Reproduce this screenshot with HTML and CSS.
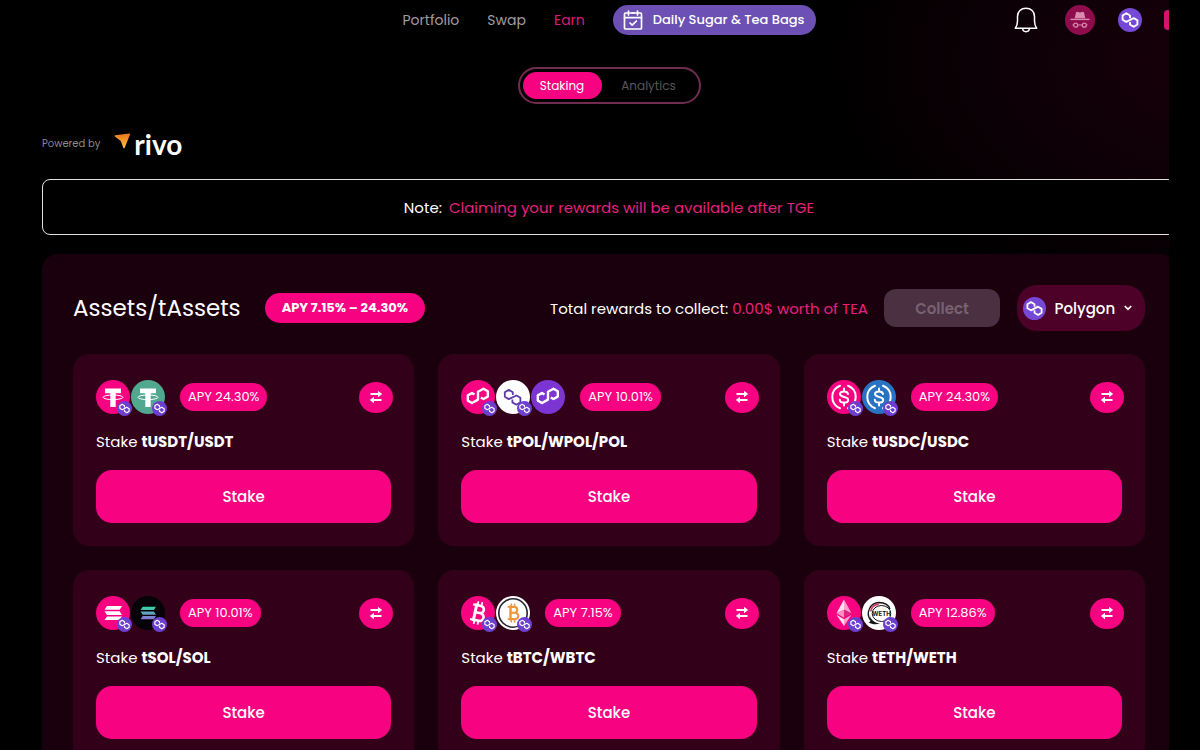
FILE: index.html
```html
<!DOCTYPE html>
<html lang="en">
<head>
<meta charset="utf-8">
<meta name="viewport" content="width=device-width, initial-scale=1">
<title>Staking</title>
<link rel="stylesheet" href="styles.css">
</head>
<body>
<svg class="defs" aria-hidden="true">
  <linearGradient id="rivo-grad" x1="0" y1="0" x2="0" y2="1"><stop offset="0" stop-color="#ee7420"/><stop offset="1" stop-color="#ffc53a"/></linearGradient>
  <linearGradient id="sol-grad" x1="0" y1="0" x2="0" y2="1"><stop offset="0" stop-color="#35d6a4"/><stop offset="1" stop-color="#8a72d8"/></linearGradient>
  <symbol id="chain" viewBox="0 0 24 24"><path d="M12 10.200V7.500L8.300 5.300 4.600 7.500v4.200l3.700 2.200 7.400-3.800 3.700 2.200v4.200l-3.700 2.200-3.700-2.200v-2.600" fill="none" stroke="currentColor" stroke-width="1.900" stroke-linejoin="round"/></symbol>
  <symbol id="pol" viewBox="0 0 34 34"><path d="M13.500 14.500 11 13l-4.200 2.400v5.200L11 23l6-3.400v-7.800L22.500 8.800l4.300 2.400v5.400L22.500 19l-2.700-1.500" fill="none" stroke="currentColor" stroke-width="2.400" stroke-linejoin="round"/></symbol>
  <symbol id="matic" viewBox="0 0 34 34"><path d="M16.800 15v-2.800l-4-2.300-4 2.300v4.600l4 2.300 7.600-3.600 4 2.300v4.600l-4 2.300-4-2.300v-2.800" fill="none" stroke="currentColor" stroke-width="1.800" stroke-linejoin="round"/></symbol>
  <symbol id="tether" viewBox="0 0 34 34"><path d="M9 8.500h16v4.800h-5.300V27h-5.400V13.300H9z" fill="currentColor"/><ellipse cx="17" cy="17.300" rx="10" ry="2.300" fill="none" stroke="currentColor" stroke-width="1"/></symbol>
  <symbol id="usdc" viewBox="0 0 34 34"><g fill="none" stroke="currentColor" stroke-width="2" stroke-linecap="round"><path d="M13 5.800a12 12 0 0 0 0 22.400M21 5.800a12 12 0 0 1 0 22.400"/><path d="M17 8.500v3M17 22.500v3M21 14c-.3-1.800-1.700-2.600-4-2.600s-4 .9-4 2.700c0 4 8.200 1.700 8.200 5.800 0 1.800-1.700 2.700-4.200 2.700s-4.100-1-4.200-2.900"/></g></symbol>
  <symbol id="solana" viewBox="0 0 34 34"><path d="M11 10h15l-2.300 3.700H8.500zM8.500 15.200h15.200l2.300 3.700H11zM11 20.400h15l-2.300 3.700H8.500z"/></symbol>
  <symbol id="bitcoin" viewBox="0 0 34 34"><g fill="none" stroke="currentColor"><path d="M13 9.500h5.500a3.600 3.600 0 0 1 0 7.200H13.500h6a3.900 3.900 0 0 1 0 7.800H13" stroke-width="2.600"/><path d="M14 8v18" stroke-width="3"/><path d="M10.500 9.500H14M10.500 24.500H14" stroke-width="2.200"/><path d="M15 5.500v4M19 5.500v4M15 24.500v4M19 24.500v4" stroke-width="1.800"/></g></symbol>
  <symbol id="swap" viewBox="0 0 16 16"><path d="M2.500 5h9.500M13.500 11H4" fill="none" stroke="currentColor" stroke-width="2"/><path d="M10 1.800 14.200 5 10 8.200zM6 7.800 1.800 11 6 14.200z" fill="currentColor"/></symbol>
</svg>

<div class="app">
<div class="shell">
  <header class="header">
    <nav class="nav">
      <a href="#">Portfolio</a>
      <a href="#">Swap</a>
      <a href="#" class="active">Earn</a>
      <a href="#" class="daily">
        <svg width="20" height="20" viewBox="0 0 20 20" fill="none" stroke="currentColor" stroke-width="1.700" stroke-linejoin="round" stroke-linecap="round" aria-hidden="true"><rect x="1.500" y="3" width="17" height="16" rx="1"/><path d="M1.500 7.700h17M5.500 1v4M14.500 1v4M7 13l2.200 2.200 4.200-4.200M9 3h2"/></svg>
        Daily Sugar &amp; Tea Bags
      </a>
    </nav>
    <div class="actions">
      <button class="icon-btn bell" aria-label="Notifications"><svg width="24" height="26" viewBox="0 0 24 26" fill="none" stroke="currentColor" stroke-width="1.500" stroke-linejoin="round" aria-hidden="true"><path d="M1.300 21.200c1.800-2.500 2.200-4 2.200-7.200V9.500C3.500 4.500 7 1.300 12 1.300s8.500 3.200 8.500 8.200V14c0 3.200.4 4.700 2.200 7.200zM8.500 21.500c.3 2 1.700 3.200 3.500 3.200s3.200-1.200 3.500-3.200"/></svg></button>
      <button class="icon-btn avatar" aria-label="Account"><svg width="20" height="18" viewBox="0 0 20 18" aria-hidden="true"><path d="M4.700 7.200 6 1.500C6.500.3 8 .5 9 1.200c.7.400 1.300.4 2 0 1.200-.8 2.500-.8 3 .3l1.300 5.700z" fill="#d98ab0"/><path d="M.5 8.400h19" stroke="#d98ab0" stroke-width="1.400"/><g fill="none" stroke="#d98ab0" stroke-width="1.200"><circle cx="5.700" cy="14.200" r="2"/><circle cx="14.300" cy="14.200" r="2"/><path d="M7.700 14h4.600M3.700 14H2.500M16.300 14h1.200"/></g></svg></button>
      <button class="icon-btn network" aria-label="Network"><svg width="24" height="24" aria-hidden="true"><use href="#chain"/></svg></button>
      <button class="icon-btn wallet" aria-label="Wallet"></button>
    </div>
  </header>

  <main class="main">
    <div class="switch">
      <button class="tab selected">Staking</button>
      <button class="tab">Analytics</button>
    </div>

    <div class="powered">
      <span>Powered by</span>
      <span class="rivo"><svg width="17" height="16" viewBox="0 0 17 16" aria-hidden="true"><path d="M1 2.300 15.300.6q1 0 .7 1L10.700 14.800q-.7 1-1.400 0L6.800 8 .8 3.400Q.3 2.600 1 2.300z" fill="url(#rivo-grad)"/></svg><b>rivo</b></span>
    </div>

    <p class="note"><span>Note:</span> <span class="pink">Claiming your rewards will be available after TGE</span></p>

    <section class="panel">
      <div class="panel-head">
        <h1>Assets/tAssets</h1>
        <span class="range">APY 7.15% – 24.30%</span>
        <p class="rewards">Total rewards to collect: <span class="pink">0.00$ worth of TEA</span></p>
        <button class="collect" disabled>Collect</button>
        <div class="chain-select">
          <svg class="chain-logo" width="23" height="23" aria-hidden="true"><use href="#chain"/></svg>
          <select aria-label="Network"><option>Polygon</option></select>
          <svg width="8" height="6" viewBox="0 0 8 6" fill="none" stroke="#fff" stroke-width="1.700" aria-hidden="true"><path d="M.8 1 4 4.300 7.200 1"/></svg>
        </div>
      </div>

      <div class="cards">
        <article class="card">
          <div class="card-top">
            <div class="tokens">
              <span class="token rose"><svg class="logo"><use href="#tether"/></svg><svg class="badge"><use href="#chain"/></svg></span>
              <span class="token teal"><svg class="logo"><use href="#tether"/></svg><svg class="badge"><use href="#chain"/></svg></span>
            </div>
            <span class="apy">APY 24.30%</span>
            <button class="swap" aria-label="Swap"><svg width="16" height="16"><use href="#swap"/></svg></button>
          </div>
          <h2>Stake <b>tUSDT/USDT</b></h2>
          <button class="stake">Stake</button>
        </article>

        <article class="card">
          <div class="card-top">
            <div class="tokens">
              <span class="token rose"><svg class="logo"><use href="#pol"/></svg><svg class="badge"><use href="#chain"/></svg></span>
              <span class="token white violet-ink"><svg class="logo"><use href="#matic"/></svg><svg class="badge"><use href="#chain"/></svg></span>
              <span class="token violet"><svg class="logo"><use href="#pol"/></svg></span>
            </div>
            <span class="apy">APY 10.01%</span>
            <button class="swap" aria-label="Swap"><svg width="16" height="16"><use href="#swap"/></svg></button>
          </div>
          <h2>Stake <b>tPOL/WPOL/POL</b></h2>
          <button class="stake">Stake</button>
        </article>

        <article class="card">
          <div class="card-top">
            <div class="tokens">
              <span class="token rose"><svg class="logo"><use href="#usdc"/></svg><svg class="badge"><use href="#chain"/></svg></span>
              <span class="token blue"><svg class="logo"><use href="#usdc"/></svg><svg class="badge"><use href="#chain"/></svg></span>
            </div>
            <span class="apy">APY 24.30%</span>
            <button class="swap" aria-label="Swap"><svg width="16" height="16"><use href="#swap"/></svg></button>
          </div>
          <h2>Stake <b>tUSDC/USDC</b></h2>
          <button class="stake">Stake</button>
        </article>

        <article class="card">
          <div class="card-top">
            <div class="tokens">
              <span class="token rose"><svg class="logo" fill="#fff"><use href="#solana"/></svg><svg class="badge"><use href="#chain"/></svg></span>
              <span class="token black"><svg class="logo small-logo" fill="url(#sol-grad)"><use href="#solana"/></svg><svg class="badge"><use href="#chain"/></svg></span>
            </div>
            <span class="apy">APY 10.01%</span>
            <button class="swap" aria-label="Swap"><svg width="16" height="16"><use href="#swap"/></svg></button>
          </div>
          <h2>Stake <b>tSOL/SOL</b></h2>
          <button class="stake">Stake</button>
        </article>

        <article class="card">
          <div class="card-top">
            <div class="tokens">
              <span class="token rose"><svg class="logo" viewBox="0 0 34 34"><use href="#bitcoin" width="34" height="34" transform="rotate(12 17 17)"/></svg><svg class="badge"><use href="#chain"/></svg></span>
              <span class="token wbtc"><svg class="logo" viewBox="0 0 34 34"><circle cx="17" cy="17" r="14.200" fill="#fff" stroke="#27222f" stroke-width="1.600"/><use href="#bitcoin" x="3" y="3" width="28" height="28"/></svg><svg class="badge"><use href="#chain"/></svg></span>
            </div>
            <span class="apy">APY 7.15%</span>
            <button class="swap" aria-label="Swap"><svg width="16" height="16"><use href="#swap"/></svg></button>
          </div>
          <h2>Stake <b>tBTC/WBTC</b></h2>
          <button class="stake">Stake</button>
        </article>

        <article class="card">
          <div class="card-top">
            <div class="tokens">
              <span class="token rose"><svg class="logo" viewBox="0 0 34 34"><path d="M17 3.500 9.500 17.200 17 13.800z" fill="#ffe0ef"/><path d="M17 3.500v10.300l7.500 3.400z" fill="#ff9dcb"/><path d="M9.500 17.200 17 13.800v8z" fill="#ff8fc4"/><path d="M24.500 17.200 17 13.800v8z" fill="#d9287e"/><path d="M9.500 18.800 17 30v-6.800z" fill="#ffe0ef"/><path d="M24.500 18.800 17 30v-6.800z" fill="#ff9dcb"/></svg><svg class="badge"><use href="#chain"/></svg></span>
              <span class="token white"><svg class="logo" viewBox="0 0 34 34"><path d="M8.500 24A11 11 0 0 1 17 6.500c6 0 9.500 2.500 11 6.500" fill="none" stroke="#171317" stroke-width="1.300"/><path d="M8.700 15.500c.5-4 3.800-7 8-7.500" fill="none" stroke="#d53b66" stroke-width="1.800"/><path d="M8 20c1 4 5 7 10 7.500-4 1.500-8 .8-11.500-1 2-.3 2-1 1.500-6.500z" fill="#171317"/><ellipse cx="19.500" cy="17.500" rx="9.300" ry="8" fill="#fff" stroke="#171317" stroke-width="1"/><text x="19.500" y="19.800" class="weth" text-anchor="middle">WETH</text></svg><svg class="badge"><use href="#chain"/></svg></span>
            </div>
            <span class="apy">APY 12.86%</span>
            <button class="swap" aria-label="Swap"><svg width="16" height="16"><use href="#swap"/></svg></button>
          </div>
          <h2>Stake <b>tETH/WETH</b></h2>
          <button class="stake">Stake</button>
        </article>
      </div>
    </section>
  </main>
</div>
</div>
</body>
</html>
```

FILE: styles.css
```css
* { box-sizing: border-box; }

body {
  margin: 0;
  background: #000;
  color: #fff;
  font-family: Poppins, Inter, sans-serif;
  font-size: 15px;
}

h1, h2, p { margin: 0; font-weight: 400; }
button, select { font: inherit; color: inherit; border: 0; padding: 0; }
svg { display: block; flex: none; }
.defs { position: absolute; width: 0; height: 0; }
.pink { color: #e5227f; }

/* The page runs under the gutter on the right side of the window. */
.app { margin-right: 31px; overflow: hidden; background: #000; }
.shell {
  width: calc(100% + 49px);
  background: radial-gradient(ellipse 400px 260px at 100% 60px, #18000b, #0b0005 60%, #000 100%);
}

.header {
  display: grid;
  grid-template-columns: 1fr auto 1fr;
  align-items: center;
  height: 40px;
}
.nav {
  grid-column: 2;
  display: flex;
  align-items: center;
  gap: 28px;
  font-size: 14px;
}
.nav a { color: #a09da0; text-decoration: none; }
.nav a.active { color: #dd1c79; }
.nav a.daily {
  display: flex;
  align-items: center;
  gap: 10px;
  height: 30px;
  padding: 0 11px 0 10px;
  border-radius: 15px;
  background: #6c50b4;
  color: #fff;
  font-size: 13px;
  font-weight: 500;
}
.actions { display: flex; justify-content: flex-end; align-items: center; }
.icon-btn {
  display: grid;
  place-items: center;
  background: none;
  color: #fff;
}
.bell { margin-right: 27px; }
.avatar { width: 30px; height: 30px; margin-right: 23px; border-radius: 50%; background: #8e0c4b; }
.network { width: 24px; height: 24px; margin-right: 22px; border-radius: 50%; background: #7548d6; }
.wallet { width: 54px; height: 20px; border-radius: 4px; background: #d2146f; }

.main { padding: 27px 42px 31px; }

.switch {
  display: flex;
  width: 183px;
  height: 37px;
  margin: 0 auto;
  padding: 3px;
  border: 2px solid #702c50;
  border-radius: 19px;
}
.tab {
  flex: 1;
  border-radius: 14px;
  background: none;
  color: #58555a;
  font-size: 12px;
}
.tab.selected { flex: none; width: 79px; background: #f70281; color: #fff; }

.powered {
  display: flex;
  align-items: center;
  gap: 14px;
  height: 30px;
  margin: 25px 0 20px;
  color: #8c8a8c;
  font-size: 10px;
}
.rivo { display: flex; align-items: center; gap: 3px; color: #fff; }
.rivo svg { align-self: flex-start; margin-top: 4px; }
.rivo b { font: 700 28px/30px Lato, sans-serif; }

.note {
  display: flex;
  justify-content: center;
  align-items: center;
  gap: 7px;
  height: 56px;
  border: 1px solid #e4e0e2;
  border-radius: 8px;
  background: #000;
}

.panel {
  margin-top: 19px;
  padding: 31px;
  border-radius: 16px;
  background: #1a000d;
}
.panel-head { display: flex; align-items: center; height: 46px; margin-bottom: 23px; }
h1 { font-size: 23px; }
.range {
  margin: 0 auto 0 24px;
  padding: 0 17px;
  border-radius: 15px;
  background: #f70281;
  font-size: 13px;
  font-weight: 700;
  line-height: 30px;
}
.collect {
  width: 116px;
  height: 38px;
  margin: 0 17px 0 16px;
  border-radius: 12px;
  background: #4a3040;
  color: #776270;
  font-weight: 600;
}
.chain-select {
  display: flex;
  align-items: center;
  justify-content: space-between;
  width: 128px;
  height: 46px;
  padding: 0 13px 0 6px;
  border-radius: 20px;
  background: #4d0028;
}
.chain-logo { border-radius: 50%; background: #7548d6; }
.chain-select select { appearance: none; background: none; font-weight: 500; }

.cards { display: grid; grid-template-columns: repeat(3, 1fr); gap: 24px; }
.card { padding: 26px 23px 23px; border-radius: 16px; background: #330019; }
.card-top { display: flex; align-items: center; margin-right: -2px; }
.tokens { display: flex; gap: 1px; }
.token { position: relative; width: 34px; height: 34px; border-radius: 50%; color: #fff; }
.logo { width: 34px; height: 34px; }
.small-logo { width: 30px; height: 30px; margin: 2px; }
.badge {
  position: absolute;
  right: -2px;
  bottom: -2px;
  width: 15px;
  height: 15px;
  border-radius: 50%;
  background: #6d3fcf;
  color: #fff;
}
.rose { background: #f70281; }
.teal { background: #50a88f; }
.blue { background: #2873c4; }
.violet { background: #7c35d2; }
.white { background: #fff; }
.violet-ink { color: #5d3ba5; }
.black { background: #050307; }
.wbtc { background: #fff; color: #ed983e; }
.weth { font: 700 6px Inter, sans-serif; fill: #171317; }

.apy {
  margin: 0 auto 0 15px;
  padding: 0 8px;
  border-radius: 14px;
  background: #f70281;
  font-size: 13px;
  line-height: 28px;
}
.swap {
  display: grid;
  place-items: center;
  width: 34px;
  height: 31px;
  border-radius: 50%;
  background: #f70281;
}
h2 { margin: 16px 0; font-size: 15px; line-height: 24px; }
.stake {
  display: block;
  width: 100%;
  height: 53px;
  border-radius: 16px;
  background: #f70281;
  font-weight: 500;
}
```
